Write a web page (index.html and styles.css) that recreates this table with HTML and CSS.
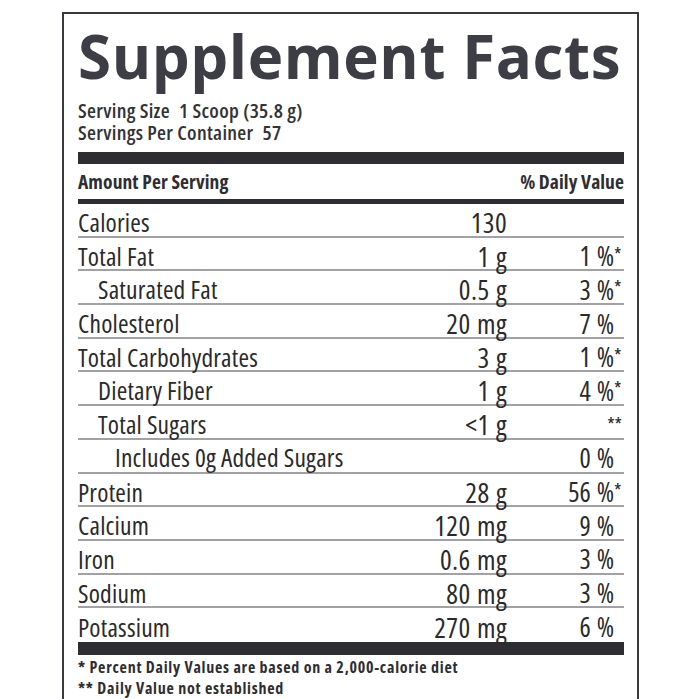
FILE: index.html
```html
<!DOCTYPE html>
<html lang="en">
<head>
<meta charset="utf-8">
<title>Supplement Facts</title>
<link rel="stylesheet" href="styles.css">
</head>
<body>
<div class="label">
  <h1 class="title">Supplement Facts</h1>
  <div class="serving">
    <div class="serving-line">Serving Size <span class="gap">1 Scoop (35.8 g)</span></div>
    <div class="serving-line">Servings Per Container <span class="gap">57</span></div>
  </div>
  <div class="bar bar-thick"></div>
  <div class="amount-head">
    <span>Amount Per Serving</span>
    <span>% Daily Value</span>
  </div>
  <div class="bar bar-mid"></div>
  <div class="rows">
    <div class="row"><span class="name">Calories</span><span class="amt">130</span><span class="dv"></span><span class="star"></span></div>
    <div class="row"><span class="name">Total Fat</span><span class="amt">1 g</span><span class="dv">1 %</span><span class="star">*</span></div>
    <div class="row"><span class="name indent1">Saturated Fat</span><span class="amt">0.5 g</span><span class="dv">3 %</span><span class="star">*</span></div>
    <div class="row"><span class="name">Cholesterol</span><span class="amt">20 mg</span><span class="dv">7 %</span><span class="star"></span></div>
    <div class="row"><span class="name">Total Carbohydrates</span><span class="amt">3 g</span><span class="dv">1 %</span><span class="star">*</span></div>
    <div class="row"><span class="name indent1">Dietary Fiber</span><span class="amt">1 g</span><span class="dv">4 %</span><span class="star">*</span></div>
    <div class="row"><span class="name indent1">Total Sugars</span><span class="amt">&lt;1 g</span><span class="dv dv-wide">**</span></div>
    <div class="row"><span class="name indent2">Includes 0g Added Sugars</span><span class="amt"></span><span class="dv">0 %</span><span class="star"></span></div>
    <div class="row"><span class="name">Protein</span><span class="amt">28 g</span><span class="dv">56 %</span><span class="star">*</span></div>
    <div class="row"><span class="name">Calcium</span><span class="amt">120 mg</span><span class="dv">9 %</span><span class="star"></span></div>
    <div class="row"><span class="name">Iron</span><span class="amt">0.6 mg</span><span class="dv">3 %</span><span class="star"></span></div>
    <div class="row"><span class="name">Sodium</span><span class="amt">80 mg</span><span class="dv">3 %</span><span class="star"></span></div>
    <div class="row row-last"><span class="name">Potassium</span><span class="amt">270 mg</span><span class="dv">6 %</span><span class="star"></span></div>
  </div>
  <div class="bar bar-thick bar-bottom"></div>
  <div class="notes">
    <div>* Percent Daily Values are based on a 2,000-calorie diet</div>
    <div>** Daily Value not established</div>
  </div>
</div>
</body>
</html>
```

FILE: styles.css
```css
html, body {
  margin: 0;
  padding: 0;
  background: #ffffff;
  overflow: hidden;
}

body {
  font-family: "Open Sans", "DejaVu Sans Condensed", sans-serif;
  font-stretch: 75%;
  color: #2a2a2c;
}

.label {
  box-sizing: border-box;
  margin: 12px 0 0 62px;
  width: 577px;
  height: 700px;
  border: 2px solid #3a3a3e;
  border-bottom: 0;
  padding: 0 13px 0 14px;
}

.title {
  margin: 0;
  height: 84px;
  font-family: "Open Sans", "Liberation Sans", sans-serif;
  font-stretch: 100%;
  font-weight: 700;
  font-size: 60px;
  line-height: 84px;
  letter-spacing: 0.6px;
  color: #3c3d45;
  white-space: nowrap;
}

.serving {
  padding-top: 1px;
  font-weight: 600;
  font-size: 20.5px;
  letter-spacing: 0.3px;
  color: #333336;
}

.serving-line {
  height: 22px;
  line-height: 22px;
  white-space: nowrap;
}

.gap {
  margin-left: 5px;
}

.bar {
  background: #2e2e32;
}

.bar-thick {
  height: 12px;
  margin-top: 9px;
}

.bar-mid {
  height: 5px;
}

.bar-bottom {
  margin-top: 0;
  height: 13px;
}

.amount-head {
  display: flex;
  justify-content: space-between;
  align-items: center;
  height: 35px;
  font-weight: 700;
  font-size: 19.5px;
  letter-spacing: 0.1px;
  color: #2e2e32;
}

.rows {
  display: flex;
  flex-direction: column;
}

.row {
  box-sizing: border-box;
  display: grid;
  grid-template-columns: minmax(0, 1fr) 120px 107px 10px;
  align-items: center;
  height: 33.7px;
  padding-top: 5px;
  border-bottom: 2px solid #a2a2a4;
  font-size: 25.5px;
  line-height: 1;
}

.row-last {
  border-bottom: 0;
}

.name {
  white-space: nowrap;
  letter-spacing: 0.2px;
}

.indent1 {
  padding-left: 20px;
}

.indent2 {
  padding-left: 37px;
}

.amt {
  text-align: right;
  white-space: nowrap;
  font-size: 27.5px;
  letter-spacing: 0.4px;
  word-spacing: 1px;
}

.dv {
  text-align: right;
  white-space: nowrap;
  font-size: 26.5px;
  word-spacing: 1px;
}

.dv-wide {
  grid-column: 3 / 5;
  padding-right: 2px;
  font-size: 19px;
  align-self: start;
  padding-top: 5px;
}

.star {
  font-size: 19px;
  align-self: start;
  padding-top: 3px;
}

.notes {
  padding-top: 2px;
  font-weight: 700;
  font-size: 16px;
  letter-spacing: 0.75px;
  line-height: 21px;
  color: #2e2e32;
}
```
